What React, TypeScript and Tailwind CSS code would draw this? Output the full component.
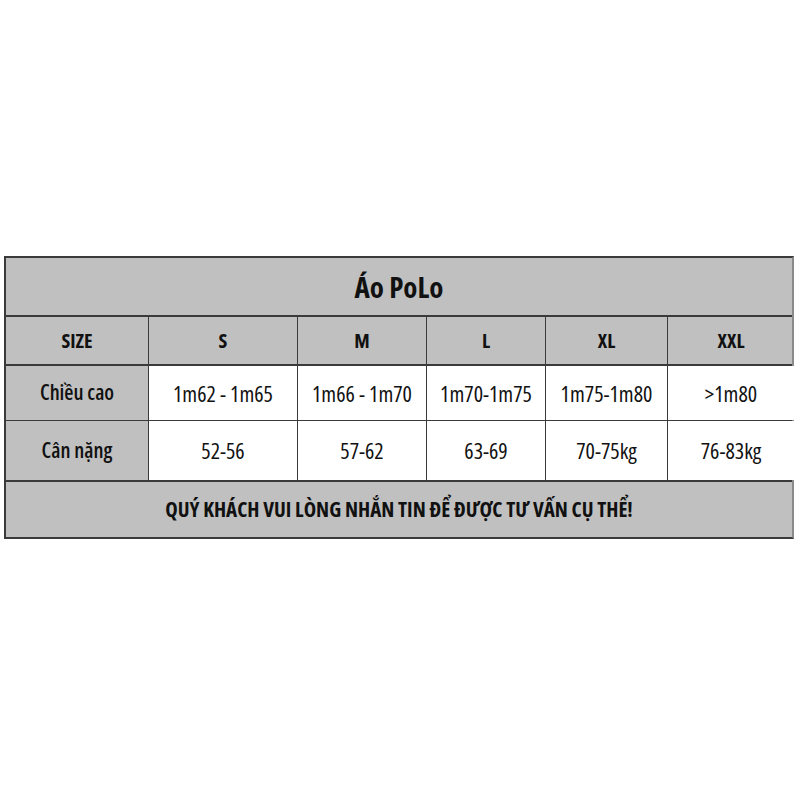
import React from 'react';

const sizes = ['S', 'M', 'L', 'XL', 'XXL'];
const heights = ['1m62 - 1m65', '1m66 - 1m70', '1m70-1m75', '1m75-1m80', '>1m80'];
const weights = ['52-56', '57-62', '63-69', '70-75kg', '76-83kg'];

const cols = 'grid grid-cols-[143px_149px_129px_119px_122px_126px]';

const App = () => {
  return (
    <div className="w-[800px] h-[800px] bg-white pt-[256px] pl-[4px] font-['Open_Sans',sans-serif] font-stretch-condensed text-[#111]">
      <div className="w-[790px] border-2 border-[#3a3a3a] border-r-[#8a8a8a]">
        {/* Title */}
        <div className="h-[59px] bg-[#c0c0c0] border-b-2 border-[#3a3a3a] flex items-center justify-center">
          <span className="text-[29px] font-bold">Áo PoLo</span>
        </div>

        {/* Header */}
        <div className={`${cols} h-[49px] bg-[#c0c0c0] border-b-2 border-[#3a3a3a]`}>
          <div className="flex items-center justify-center border-r border-[#3a3a3a] text-[20px] font-bold">SIZE</div>
          {sizes.map((s, i) => (
            <div
              key={s}
              className={`flex items-center justify-center text-[20px] font-bold ${i < sizes.length - 1 ? 'border-r border-[#3a3a3a]' : ''}`}
            >
              {s}
            </div>
          ))}
        </div>

        {/* Chiều cao */}
        <div className={`${cols} h-[55px] border-b border-[#3a3a3a]`}>
          <div className="flex items-center justify-center bg-[#c0c0c0] border-r border-[#3a3a3a] text-[21px] font-semibold">Chiều cao</div>
          {heights.map((h, i) => (
            <div
              key={h}
              className={`flex items-center justify-center bg-white text-[22px] ${i < heights.length - 1 ? 'border-r border-[#3a3a3a]' : ''}`}
            >
              {h}
            </div>
          ))}
        </div>

        {/* Cân nặng */}
        <div className={`${cols} h-[61px] border-b-2 border-[#3a3a3a]`}>
          <div className="flex items-center justify-center bg-[#c0c0c0] border-r border-[#3a3a3a] text-[21px] font-semibold">Cân nặng</div>
          {weights.map((w, i) => (
            <div
              key={w}
              className={`flex items-center justify-center bg-white text-[22px] ${i < weights.length - 1 ? 'border-r border-[#3a3a3a]' : ''}`}
            >
              {w}
            </div>
          ))}
        </div>

        {/* Footer note */}
        <div className="h-[55px] bg-[#c0c0c0] flex items-center justify-center">
          <span className="text-[21px] font-bold">QUÝ KHÁCH VUI LÒNG NHẮN TIN ĐỂ ĐƯỢC TƯ VẤN CỤ THỂ!</span>
        </div>
      </div>
    </div>
  );
};

export default App;
